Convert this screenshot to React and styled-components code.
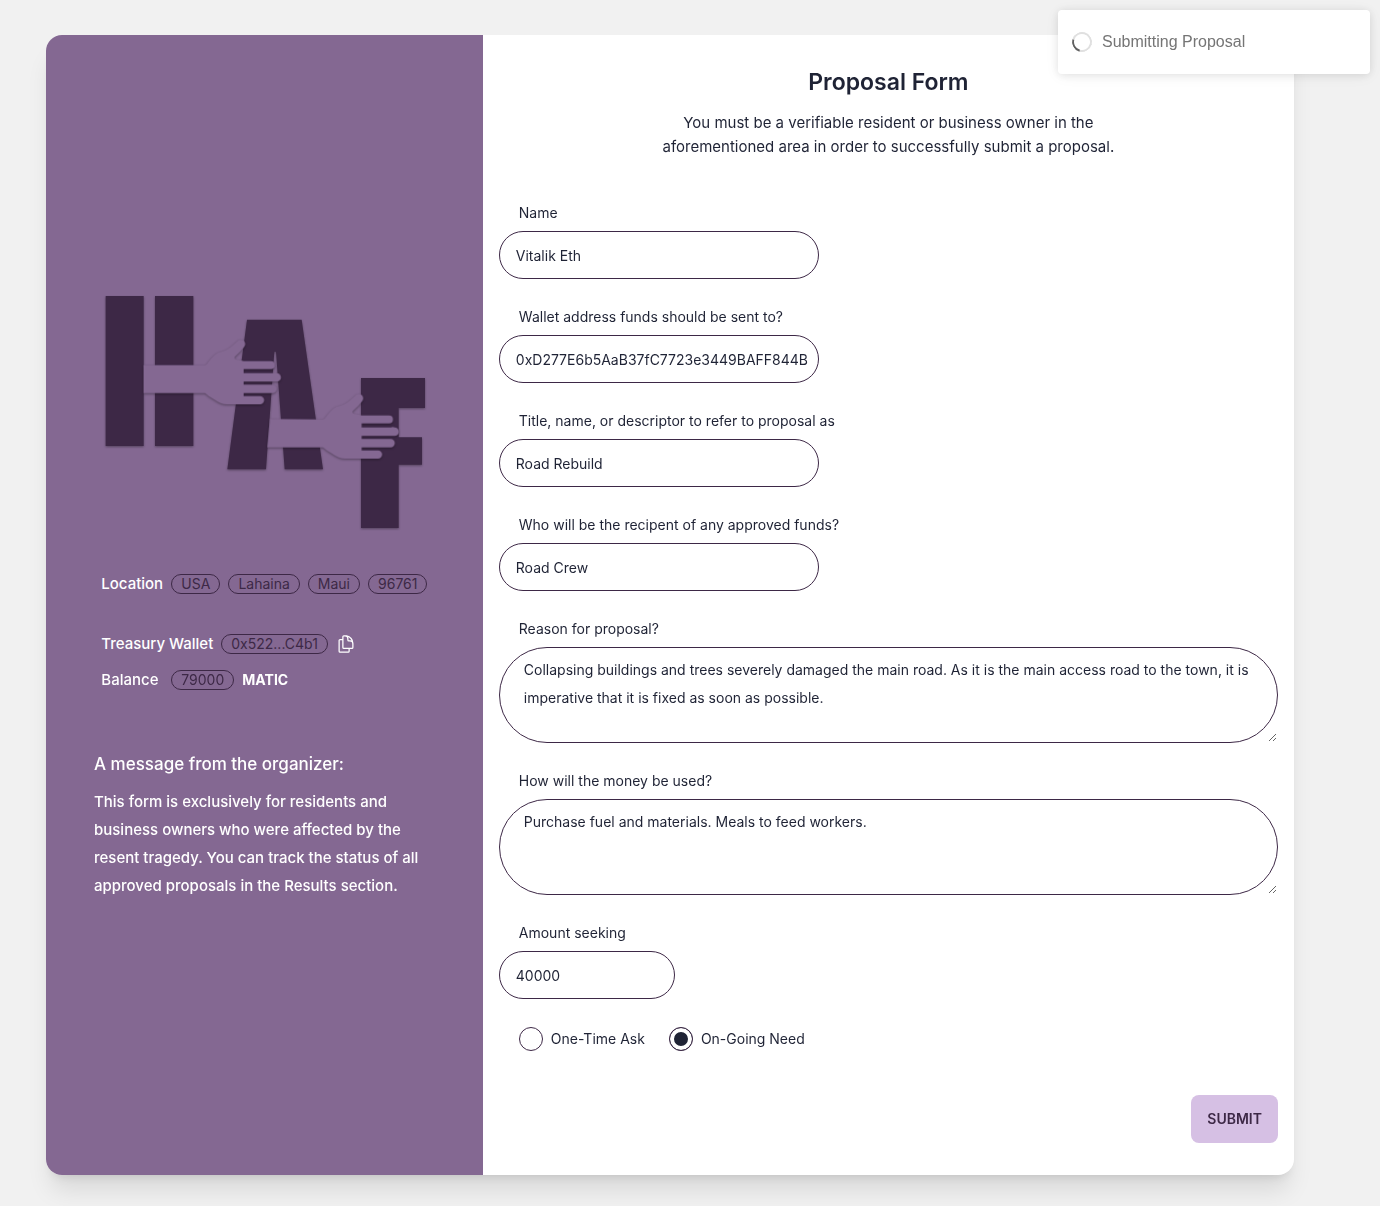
import React, { useState } from "react";
import styled, { createGlobalStyle } from "styled-components";
import { HiOutlineDocumentDuplicate } from "react-icons/hi2";

const plum = "#3d2846";
const mauve = "#846892";
const ink = "#1f2335";

const GlobalStyle = createGlobalStyle`
  *, *::before, *::after { box-sizing: border-box; }
  body {
    margin: 0;
    background: #f1f1f1;
    color: ${ink};
    font-family: Inter, "Liberation Sans", sans-serif;
    font-size: 14px;
    line-height: 20px;
  }
  h1, h2, p { margin: 0; }
  button, input, textarea { font: inherit; color: inherit; }
`;

const Page = styled.main`
  min-height: 100vh;
  padding: 35px 86px 31px 46px;
`;

const Card = styled.div`
  display: grid;
  grid-template-columns: 35fr 65fr;
  border-radius: 16px;
  overflow: hidden;
  background: #fff;
  box-shadow: 0 20px 25px -5px rgba(0, 0, 0, 0.1), 0 8px 10px -6px rgba(0, 0, 0, 0.1);
`;

const Sidebar = styled.aside`
  display: flex;
  flex-direction: column;
  align-items: center;
  justify-content: center;
  padding: 32px 48px 50px;
  background: ${mauve};
  color: #fff;
  font-size: 15px;
  line-height: 24px;
`;

const Logo = styled.svg`
  display: block;
  width: 324px;
  height: 238px;
  margin-bottom: 42px;
  overflow: visible;

  g {
    filter: drop-shadow(0 3px 3px rgba(0, 0, 0, 0.35));
  }
`;

const Facts = styled.div`
  display: flex;
  flex-direction: column;
  gap: 12px;
`;

const Fact = styled.div`
  display: flex;
  align-items: center;
  gap: 8px;
  margin-bottom: ${(p) => (p.$spaced ? 24 : 0)}px;
`;

const FactLabel = styled.span`
  min-width: 62px;
  font-weight: 500;
`;

const Badge = styled.span`
  display: inline-flex;
  align-items: center;
  height: 20px;
  padding: 0 9px;
  border: 1px solid ${plum};
  border-radius: 10px;
  color: ${plum};
  font-size: 14px;
`;

const Unit = styled.strong`
  font-size: 14px;
  font-weight: 700;
`;

const CopyButton = styled.button`
  display: flex;
  padding: 0;
  border: 0;
  background: none;
  color: #fff;
  cursor: pointer;

  svg {
    width: 20px;
    height: 20px;
  }
`;

const Message = styled.section`
  width: 100%;
  margin-top: 58px;
`;

const MessageTitle = styled.h2`
  margin-bottom: 10px;
  font-size: 17px;
  font-weight: 500;
  line-height: 28px;
`;

const MessageText = styled.p`
  font-weight: 500;
  line-height: 28px;
`;

const Form = styled.form`
  display: flex;
  flex-direction: column;
  padding: 32px 16px;
`;

const Header = styled.header`
  align-self: center;
  max-width: 480px;
  margin-bottom: 36px;
  text-align: center;
  font-size: 15px;
  line-height: 24px;
`;

const Title = styled.h1`
  margin-bottom: 14px;
  font-size: 23px;
  font-weight: 600;
  line-height: 30px;
`;

const Field = styled.div`
  display: flex;
  flex-direction: column;
  align-items: flex-start;
  margin-bottom: 20px;
`;

const FieldLabel = styled.label`
  padding: 8px 20px;
`;

const TextInput = styled.input`
  width: ${(p) => (p.$short ? 176 : 320)}px;
  max-width: 100%;
  height: 48px;
  padding: 1px 8px 0 16px;
  border: 1px solid ${plum};
  border-radius: 24px;
  background: #fff;
  outline: none;
`;

const TextBox = styled.textarea`
  display: block;
  width: 100%;
  height: 96px;
  padding: 8px 24px;
  border: 1px solid ${plum};
  border-radius: 48px;
  background: #fff;
  line-height: 28px;
  outline: none;
  resize: vertical;
`;

const Choices = styled.div`
  display: flex;
  gap: 24px;
  padding: 8px 20px;
  margin-bottom: 36px;
`;

const Choice = styled.label`
  display: flex;
  align-items: center;
  gap: 8px;
  cursor: pointer;
`;

const Radio = styled.input`
  appearance: none;
  width: 24px;
  height: 24px;
  margin: 0;
  border: 1px solid ${plum};
  border-radius: 50%;
  background: #fff;

  &:checked {
    background: ${ink};
    box-shadow: inset 0 0 0 4px #fff;
  }
`;

const Submit = styled.button`
  align-self: flex-end;
  height: 48px;
  padding: 0 16px;
  border: 0;
  border-radius: 8px;
  background: #d6c0e4;
  color: ${plum};
  font-weight: 600;
  text-transform: uppercase;
  cursor: pointer;
`;

const Toast = styled.div`
  position: fixed;
  top: 10px;
  right: 10px;
  display: flex;
  align-items: center;
  gap: 10px;
  width: 312px;
  height: 64px;
  padding: 0 14px;
  border-radius: 4px;
  background: #fff;
  box-shadow: 0 1px 10px rgba(0, 0, 0, 0.1), 0 2px 15px rgba(0, 0, 0, 0.05);
  color: #757575;
  font-family: "Liberation Sans", sans-serif;
  font-size: 16px;
`;

const Spinner = styled.span`
  width: 20px;
  height: 20px;
  border: 2px solid #e0e0e0;
  border-right-color: #616161;
  border-radius: 50%;
  transform: rotate(150deg);
`;

const palm =
  "L345,258 Q350,256 354,249 Q370,228 385,220 Q408,215 424,202 L441,187 A13,13 0 0 1 463,203 Q452,219 435,233 Q430,240 445,242 L461,246 H543 A12,12 0 0 1 543,270 H461 V282 H549 Q554,279 560,282 A13,13 0 0 1 560,308 H461 V317 H548 A12,12 0 0 1 548,342 H461 V351 H510 A12,12 0 0 1 510,376 H410 Q392,376 372,361 Q354,351 345,342";

function HafLogo() {
  return (
    <Logo viewBox="36 39 972 714" role="img" aria-label="HAF">
      <g fill={plum}>
        <rect x="47" y="51" width="114" height="450" />
        <rect x="195" y="51" width="115" height="450" />
        <path d="M471,122 H635 L699,571 H584 L558,218 H553 L528,571 H412 Z" />
        <path d="M813,297 H1005 V387 H926 V475 H996 V557 H926 V747 H813 Z" />
      </g>
      <g fill={mauve}>
        <path d={`M161,258 ${palm} H161 Z`} />
        <path d={`M186,257 ${palm} H178 Z`} transform="translate(354 163)" />
      </g>
    </Logo>
  );
}

const fields = [
  { id: "name", label: "Name", value: "Vitalik Eth" },
  { id: "wallet", label: "Wallet address funds should be sent to?", value: "0xD277E6b5AaB37fC7723e3449BAFF844B" },
  { id: "title", label: "Title, name, or descriptor to refer to proposal as", value: "Road Rebuild" },
  { id: "recipient", label: "Who will be the recipent of any approved funds?", value: "Road Crew" },
  {
    id: "reason",
    label: "Reason for proposal?",
    long: true,
    value:
      "Collapsing buildings and trees severely damaged the main road. As it is the main access road to the town, it is imperative that it is fixed as soon as possible.",
  },
  {
    id: "usage",
    label: "How will the money be used?",
    long: true,
    value: "Purchase fuel and materials. Meals to feed workers.",
  },
  { id: "amount", label: "Amount seeking", value: "40000", short: true },
];

const places = ["USA", "Lahaina", "Maui", "96761"];
const needs = ["One-Time Ask", "On-Going Need"];

export default function App() {
  const [need, setNeed] = useState("On-Going Need");

  return (
    <>
      <GlobalStyle />
      <Page>
        <Card>
          <Sidebar>
            <HafLogo />
            <Facts>
              <Fact $spaced>
                <FactLabel>Location</FactLabel>
                {places.map((place) => (
                  <Badge key={place}>{place}</Badge>
                ))}
              </Fact>
              <Fact>
                <FactLabel>Treasury Wallet</FactLabel>
                <Badge>0x522...C4b1</Badge>
                <CopyButton type="button" aria-label="Copy wallet address">
                  <HiOutlineDocumentDuplicate />
                </CopyButton>
              </Fact>
              <Fact>
                <FactLabel>Balance</FactLabel>
                <Badge>79000</Badge>
                <Unit>MATIC</Unit>
              </Fact>
            </Facts>
            <Message>
              <MessageTitle>A message from the organizer:</MessageTitle>
              <MessageText>
                This form is exclusively for residents and business owners who were affected by the
                resent tragedy. You can track the status of all approved proposals in the Results
                section.
              </MessageText>
            </Message>
          </Sidebar>
          <Form onSubmit={(e) => e.preventDefault()}>
            <Header>
              <Title>Proposal Form</Title>
              <p>
                You must be a verifiable resident or business owner in the aforementioned area in
                order to successfully submit a proposal.
              </p>
            </Header>
            {fields.map((f) => (
              <Field key={f.id}>
                <FieldLabel htmlFor={f.id}>{f.label}</FieldLabel>
                {f.long ? (
                  <TextBox id={f.id} defaultValue={f.value} spellCheck={false} />
                ) : (
                  <TextInput id={f.id} type="text" defaultValue={f.value} $short={f.short} />
                )}
              </Field>
            ))}
            <Choices role="radiogroup" aria-label="Kind of need">
              {needs.map((n) => (
                <Choice key={n}>
                  <Radio type="radio" name="need" checked={need === n} onChange={() => setNeed(n)} />
                  {n}
                </Choice>
              ))}
            </Choices>
            <Submit type="submit">Submit</Submit>
          </Form>
        </Card>
      </Page>
      <Toast role="status">
        <Spinner />
        Submitting Proposal
      </Toast>
    </>
  );
}
